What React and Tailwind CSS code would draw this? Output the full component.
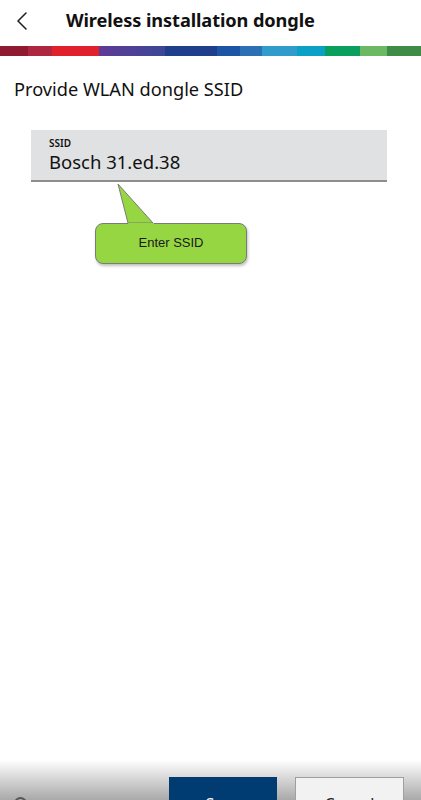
import { ChevronLeft } from 'lucide-react';

const stripes = [
  ['w-[28px]', 'bg-[#8e1b30]'],
  ['w-[24px]', 'bg-[#ad2740]'],
  ['w-[47px]', 'bg-[#e0212b]'],
  ['w-[66px]', 'bg-gradient-to-r from-[#5e3995] to-[#3b4798]'],
  ['w-[52px]', 'bg-[#1f3f8d]'],
  ['w-[23px]', 'bg-[#1c55a5]'],
  ['w-[22px]', 'bg-[#2d6fb4]'],
  ['w-[35px]', 'bg-[#2f9ccb]'],
  ['w-[28px]', 'bg-[#0ba0c6]'],
  ['w-[35px]', 'bg-[#0a9f5f]'],
  ['w-[27px]', 'bg-[#6cb863]'],
  ['flex-1', 'bg-[#3f8b48]'],
];

const App = () => {
  return (
    <div className="h-[800px] w-[421px] overflow-hidden bg-white flex flex-col font-['Noto_Sans',sans-serif] text-[#111]">
      {/* Header */}
      <header className="h-[42px] flex items-center">
        <button className="w-[44px] h-[42px] flex items-center justify-center pr-[1px]">
          <ChevronLeft size={32} strokeWidth={1.2} className="text-[#222]" />
        </button>
        <h1 className="ml-[22px] text-[18.2px] font-bold tracking-[-0.1px]">Wireless installation dongle</h1>
      </header>

      {/* Supergraphic */}
      <div className="mt-[4px] h-[10px] flex">
        {stripes.map(([w, c], i) => (
          <div key={i} className={`${w} ${c} h-full`} />
        ))}
      </div>

      {/* Content */}
      <main className="flex-1 px-[14px]">
        <p className="mt-[21px] text-[18.2px] leading-[25px]">Provide WLAN dongle SSID</p>

        <div className="relative mt-[28px] ml-[17px] w-[356px]">
          <div className="h-[52px] bg-[#e0e1e3] border-b-2 border-[#8d8d8d] px-[18px] pt-[7px]">
            <div className="text-[10px] leading-[12px] font-semibold">SSID</div>
            <div className="text-[18.5px] leading-[24px] mt-[1px]">Bosch 31.ed.38</div>
          </div>

          {/* Tooltip */}
          <div className="absolute left-[64px] top-[54px] w-[152px]">
            <svg width="60" height="44" className="absolute left-[-2px] top-[-1px] overflow-visible">
              <path d="M25 1 L35 40 L60 40 Z" fill="#96d642" stroke="#7b7b7b" strokeWidth="1" />
            </svg>
            <div className="relative mt-[39px] h-[41px] rounded-[8px] bg-[#96d642] border border-[#7b7b7b] shadow-[1px_2px_3px_rgba(0,0,0,0.25)] flex items-center justify-center font-['Liberation_Sans',sans-serif] text-[13px] text-[#1a1a1a] pb-[2px]">
              Enter SSID
            </div>
            <div className="absolute left-[33px] top-[39px] w-[26px] h-[2px] bg-[#96d642]" />
          </div>
        </div>
      </main>

      {/* Footer */}
      <footer className="h-[40px] bg-gradient-to-b from-white to-[#a9a9a9] relative flex items-start">
        <div className="absolute left-[14px] top-[37px] w-[13px] h-[13px] rounded-full border-2 border-[#555]" />
        <div className="ml-[169px] mt-[17px] flex gap-[18px]">
          <button className="w-[108px] h-[44px] bg-[#003b72] text-white text-[16px] pt-[15px] flex justify-center items-start">Save</button>
          <button className="w-[109px] h-[44px] bg-[#f2f2f2] border border-[#9aa0a6] text-[#222] text-[16px] pt-[14px] flex justify-center items-start">Cancel</button>
        </div>
      </footer>
    </div>
  );
};

export default App;
